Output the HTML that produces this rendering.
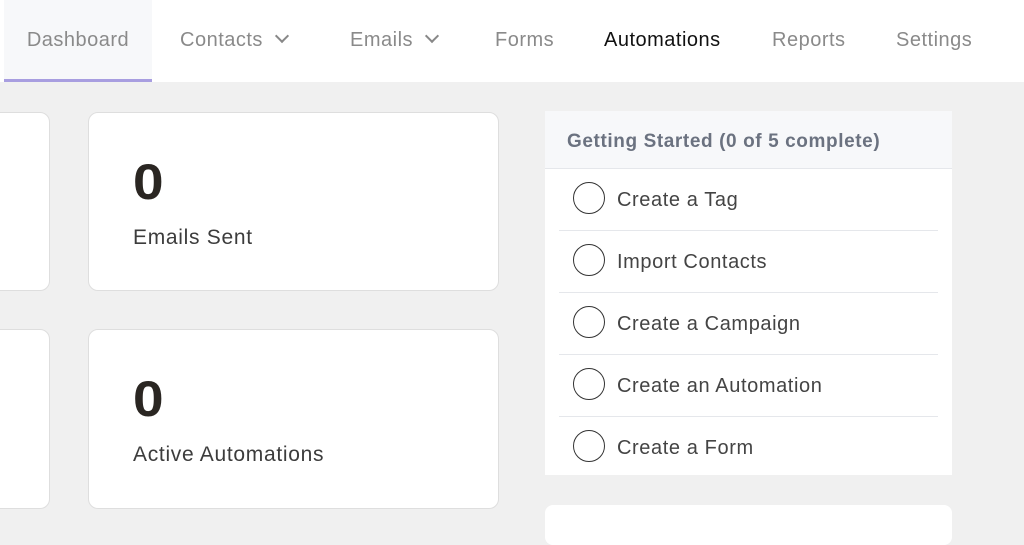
<!DOCTYPE html><html><head><style>
body{margin:0;width:1024px;height:524px;overflow:hidden;background:#f0f0f0;font-family:"Liberation Sans",sans-serif;position:relative}
.nav{position:absolute;left:0;top:0;width:1024px;height:82px;background:#fff}
.tab{position:absolute;top:0;height:82px;line-height:80px;font-size:20px;color:#8a8a8a;letter-spacing:0.5px}
.chev{display:inline-block;width:8px;height:8px;border-right:2px solid #888;border-bottom:2px solid #888;transform:rotate(45deg);margin-left:14px;position:relative;top:-5px}
.card{position:absolute;background:#fff;border:1px solid #dedede;border-radius:10px}
.num{position:absolute;left:44px;top:40px;font-size:50px;font-weight:bold;color:#2a2622;transform:scaleX(1.1);transform-origin:left}
.lbl{position:absolute;left:44px;top:113px;font-size:21px;color:#3c3c3c;letter-spacing:0.7px}
.panel{position:absolute;left:545px;top:111px;width:407px;height:364px;background:#fff}
.hd{height:57px;background:#f7f8fa;border-bottom:1px solid #e5e7eb;font-weight:bold;font-size:19px;color:#6b7280;line-height:61px;padding-left:22px;letter-spacing:0.6px}
.row{position:relative;margin:0 14px;height:61px;border-bottom:1px solid #e5e7eb}
.row:last-child{border-bottom:none}
.c{position:absolute;left:14px;top:13px;width:30px;height:30px;border:1.5px solid #333;border-radius:50%}
.t{position:absolute;left:58px;top:1px;line-height:60px;font-size:20px;color:#444;letter-spacing:0.6px}
</style></head><body>
<div class="nav">
<div class="tab" style="left:4px;width:148px;background:#f7f8fa;text-align:center;border-bottom:3px solid #a89ee0;height:79px">Dashboard</div>
<div class="tab" style="left:180px">Contacts<span class="chev"></span></div>
<div class="tab" style="left:350px">Emails<span class="chev"></span></div>
<div class="tab" style="left:495px">Forms</div>
<div class="tab" style="left:604px;color:#111">Automations</div>
<div class="tab" style="left:772px">Reports</div>
<div class="tab" style="left:896px">Settings</div>
</div>
<div class="card" style="left:-20px;top:112px;width:68px;height:177px"></div>
<div class="card" style="left:88px;top:112px;width:409px;height:177px"><div class="num">0</div><div class="lbl">Emails Sent</div></div>
<div class="card" style="left:-20px;top:329px;width:68px;height:178px"></div>
<div class="card" style="left:88px;top:329px;width:409px;height:178px"><div class="num">0</div><div class="lbl">Active Automations</div></div>
<div class="panel"><div class="hd">Getting Started (0 of 5 complete)</div>
<div class="row"><div class="c"></div><div class="t">Create a Tag</div></div>
<div class="row"><div class="c"></div><div class="t">Import Contacts</div></div>
<div class="row"><div class="c"></div><div class="t">Create a Campaign</div></div>
<div class="row"><div class="c"></div><div class="t">Create an Automation</div></div>
<div class="row"><div class="c"></div><div class="t">Create a Form</div></div>
</div>
<div style="position:absolute;left:545px;top:505px;width:407px;height:40px;background:#fff;border-radius:8px"></div>
</body></html>
